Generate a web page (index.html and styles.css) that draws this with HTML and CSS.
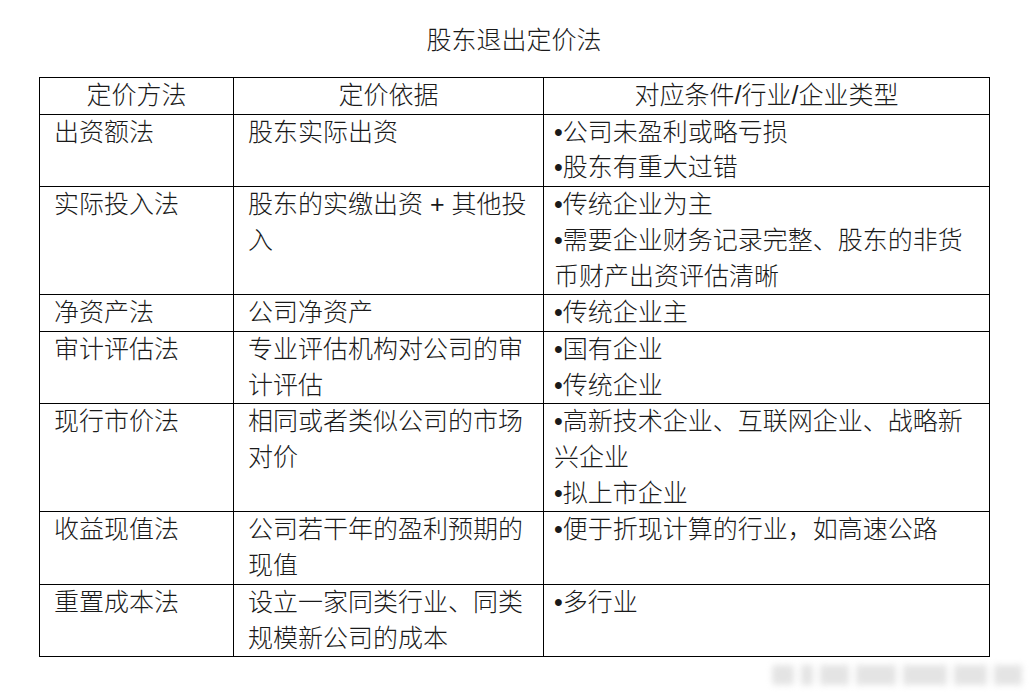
FILE: index.html
```html
<!DOCTYPE html>
<html lang="zh-CN">
<head>
<meta charset="utf-8">
<title>股东退出定价法</title>
<link rel="stylesheet" href="styles.css">
</head>
<body>
<div class="page">
  <h1 class="title">股东退出定价法</h1>
  <table class="grid">
    <colgroup>
      <col class="c1"><col class="c2"><col class="c3">
    </colgroup>
    <thead>
      <tr><th>定价方法</th><th>定价依据</th><th>对应条件/行业/企业类型</th></tr>
    </thead>
    <tbody>
      <tr><td>出资额法</td><td>股东实际出资</td><td class="b">•公司未盈利或略亏损<br>•股东有重大过错</td></tr>
      <tr><td>实际投入法</td><td>股东的实缴出资 + 其他投<br>入</td><td class="b">•传统企业为主<br>•需要企业财务记录完整、股东的非货<br>币财产出资评估清晰</td></tr>
      <tr><td>净资产法</td><td>公司净资产</td><td class="b">•传统企业主</td></tr>
      <tr><td>审计评估法</td><td>专业评估机构对公司的审<br>计评估</td><td class="b">•国有企业<br>•传统企业</td></tr>
      <tr><td>现行市价法</td><td>相同或者类似公司的市场<br>对价</td><td class="b">•高新技术企业、互联网企业、战略新<br>兴企业<br>•拟上市企业</td></tr>
      <tr><td>收益现值法</td><td>公司若干年的盈利预期的<br>现值</td><td class="b">•便于折现计算的行业，如高速公路</td></tr>
      <tr><td>重置成本法</td><td>设立一家同类行业、同类<br>规模新公司的成本</td><td class="b">•多行业</td></tr>
    </tbody>
  </table>
  <div class="mark" aria-hidden="true">
    <span class="m1"></span><span class="m2"></span><span class="m3"></span><span class="m4"></span><span class="m5"></span><span class="m6"></span><span class="m7"></span>
  </div>
</div>
</body>
</html>
```

FILE: styles.css
```css
html, body {
  margin: 0;
  padding: 0;
  background: #ffffff;
}
body {
  font-family: "Liberation Sans", "Noto Sans CJK SC", sans-serif;
  color: #1a1a1a;
}
.page {
  position: relative;
  width: 1033px;
  height: 695px;
  overflow: hidden;
}
.title {
  margin: 0;
  width: 950px;
  margin-left: 39px;
  height: 77px;
  box-sizing: border-box;
  padding-top: 22px;
  line-height: 36px;
  font-size: 25px;
  font-weight: 300;
  text-align: center;
}
.grid {
  margin-left: 39px;
  border-collapse: collapse;
  table-layout: fixed;
  width: 950px;
  font-size: 25px;
  font-weight: 300;
}
.c1 { width: 194px; }
.c2 { width: 310px; }
.c3 { width: 446px; }
.grid th, .grid td {
  border: 1px solid #000;
  padding: 0 0 0 14px;
  line-height: 35.7px;
  white-space: nowrap;
  vertical-align: top;
  text-align: left;
  font-weight: 300;
}
.grid th {
  text-align: center;
  padding: 0;
}
.grid td.b {
  padding-left: 10px;
}
.mark {
  position: absolute;
  left: 772px;
  top: 660px;
  width: 250px;
  height: 30px;
  display: flex;
  align-items: center;
  gap: 7px;
  filter: blur(3px);
  opacity: 0.45;
}
.mark span {
  display: block;
  background: #c4c4c4;
  height: 20px;
}
.m1 { width: 22px; border-radius: 4px; }
.m2 { width: 12px; }
.m3 { width: 30px; }
.m4 { width: 40px; }
.m5 { width: 44px; }
.m6 { width: 34px; }
.m7 { width: 28px; }
```
